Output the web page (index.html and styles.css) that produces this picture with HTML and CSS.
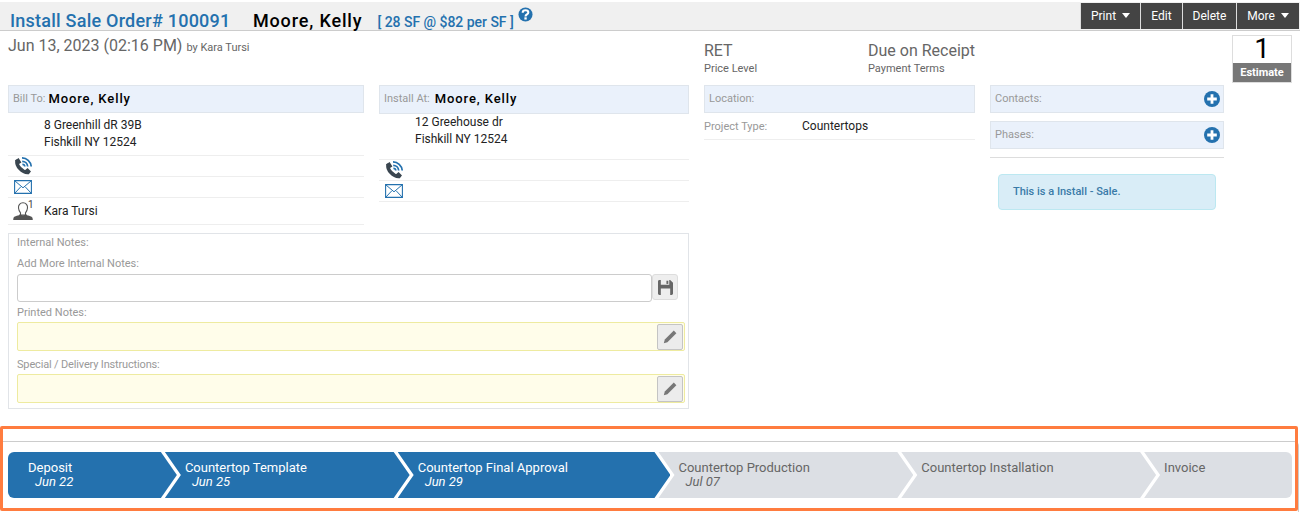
FILE: index.html
```html
<!DOCTYPE html>
<html lang="en">
<head>
<meta charset="utf-8">
<title>Install Sale Order</title>
<link rel="stylesheet" href="styles.css">
</head>
<body>
<svg class="defs" width="0" height="0" aria-hidden="true">
  <defs>
    <symbol id="phone" viewBox="0 0 18 18">
      <path fill="none" stroke="#3a4650" stroke-width="3.600" stroke-linecap="round" d="M3 4.200C2.200 8.600 8.200 15.600 13.800 15.400"/>
      <path fill="#3a4650" d="M1 3.400 4.600 1l2.800 4.400-3.200 2ZM10.600 13.400l3-2.400 3.400 3.400-2.600 3Z"/>
      <path fill="none" stroke="#2471ae" stroke-width="1.700" d="M8 .9c4.700 0 8.800 3.500 9.200 8.600M8.200 4.300c2.700 0 5.200 2 5.500 5.200M8.400 7.300c1.200 0 2.300.9 2.400 2.200"/>
    </symbol>
    <symbol id="mail" viewBox="0 0 18 14">
      <path fill="#fff" stroke="#2471ae" stroke-width="1.100" d="M.6.6h16.800v12.800H.6z"/>
      <path fill="none" stroke="#2471ae" d="m.8.8 8.200 7 8.200-7M.8 13.200l6-6.400M17.200 13.200l-6-6.400"/>
    </symbol>
    <symbol id="user" viewBox="0 0 20 18">
      <path fill="#fff" stroke="#555" stroke-width="1.100" d="M10 .8c-3 0-4.800 2.200-4.500 5.200.2 2 1 3.700 2 4.800v1.500l-.5.700h6l-.5-.7v-1.500c1-1.100 1.800-2.800 2-4.800.3-3-1.500-5.200-4.500-5.200Z"/>
      <path fill="#555" d="M7.200 12.400c-.8 1-5.900 1.400-6.700 3.300L.2 18h19.600l-.3-2.300c-.8-1.900-5.900-2.300-6.700-3.300-1.500 1-4.100 1-5.600 0Z"/>
    </symbol>
    <symbol id="plus" viewBox="0 0 16 16">
      <circle cx="8" cy="8" r="8" fill="#2471ae"/>
      <path fill="#fff" d="M6.600 3.200h2.800v3.400h3.400v2.800H9.400v3.400H6.600V9.400H3.200V6.600h3.400z"/>
    </symbol>
    <symbol id="pencil" viewBox="0 0 14 14">
      <path fill="#777" d="M10.800.6 13.400 3.200 4.400 12.200.8 13.200l1-3.600z"/>
    </symbol>
  </defs>
</svg>

<header class="topbar">
  <h1 class="title"><span class="title-blue">Install Sale Order# 100091</span> <span class="title-name">Moore, Kelly</span></h1>
  <span class="sf">[ 28 SF @ $82 per SF ]</span>
  <svg class="help" viewBox="0 0 16 16" aria-hidden="true"><circle cx="8" cy="8" r="7.500" fill="#2471ae"/><path fill="none" stroke="#fff" stroke-width="2.200" d="M5 6c0-1.700 1.300-2.600 3-2.600s3 .9 3 2.400c0 2.100-3 2-3 4.200"/><rect x="6.800" y="11" width="2.500" height="2.400" fill="#fff"/></svg>
  <nav class="actions">
    <button class="act">Print <i class="caret"></i></button>
    <button class="act">Edit</button>
    <button class="act">Delete</button>
    <button class="act">More <i class="caret"></i></button>
  </nav>
</header>

<main class="main">
  <section class="left">
    <p class="created"><span class="created-date">Jun 13, 2023 (02:16 PM)</span> <span class="created-by">by Kara Tursi</span></p>
    <div class="addresses">
      <div class="addr-col bill">
        <div class="bar"><span class="bar-label">Bill To:</span><strong class="bar-name">Moore, Kelly</strong></div>
        <div class="addr-text">8 Greenhill dR 39B<br>Fishkill NY 12524</div>
        <div class="addr-row"><svg class="ico-phone"><use href="#phone"/></svg></div>
        <div class="addr-row"><svg class="ico-mail"><use href="#mail"/></svg></div>
        <div class="addr-row rep"><span class="rep-icon"><svg class="ico-user"><use href="#user"/></svg><sup class="rep-num">1</sup></span><span>Kara Tursi</span></div>
      </div>
      <div class="addr-col install">
        <div class="bar"><span class="bar-label">Install At:</span><strong class="bar-name">Moore, Kelly</strong></div>
        <div class="addr-text">12 Greehouse dr<br>Fishkill NY 12524</div>
        <div class="addr-row"><svg class="ico-phone"><use href="#phone"/></svg></div>
        <div class="addr-row"><svg class="ico-mail"><use href="#mail"/></svg></div>
      </div>
    </div>
    <div class="notes">
      <div class="note-label first">Internal Notes:</div>
      <div class="note-label add">Add More Internal Notes:</div>
      <div class="add-row">
        <div class="input"></div>
        <button class="save" aria-label="Save"><svg class="ico-save" viewBox="0 0 16 16"><path fill="#666" d="M0 1.500C0 .7.700 0 1.500 0H3v5h9V0h1l3 3v11.500c0 .8-.7 1.500-1.500 1.500h-13C.7 16 0 15.300 0 14.500ZM3 9v7h10V9Z"/><rect x="9" y="0.800" width="2" height="3.400" fill="#666"/></svg></button>
      </div>
      <div class="note-label printed">Printed Notes:</div>
      <div class="yellow"><button class="edit" aria-label="Edit"><svg class="ico-pencil"><use href="#pencil"/></svg></button></div>
      <div class="note-label special">Special / Delivery Instructions:</div>
      <div class="yellow"><button class="edit" aria-label="Edit"><svg class="ico-pencil"><use href="#pencil"/></svg></button></div>
    </div>
  </section>

  <section class="col3">
    <div class="terms">
      <div class="term term-a"><div class="term-value">RET</div><div class="term-label">Price Level</div></div>
      <div class="term"><div class="term-value">Due on Receipt</div><div class="term-label">Payment Terms</div></div>
    </div>
    <div class="bar"><span class="bar-label">Location:</span></div>
    <div class="ptype"><span class="ptype-label">Project Type:</span><span>Countertops</span></div>
  </section>

  <section class="col4">
    <div class="bar bar-plus"><span class="bar-label">Contacts:</span><svg class="ico-plus"><use href="#plus"/></svg></div>
    <div class="bar bar-plus"><span class="bar-label">Phases:</span><svg class="ico-plus"><use href="#plus"/></svg></div>
    <div class="rule"></div>
    <div class="alert">This is a Install - Sale.</div>
  </section>

  <aside class="col5">
    <div class="status">
      <div class="status-num">1</div>
      <div class="status-label">Estimate</div>
    </div>
  </aside>
</main>

<section class="flow">
  <div class="steps">
    <div class="step done s1"><div class="step-name">Deposit</div><div class="step-date">Jun 22</div></div>
    <div class="step done s2"><div class="step-name">Countertop Template</div><div class="step-date">Jun 25</div></div>
    <div class="step done s3"><div class="step-name">Countertop Final Approval</div><div class="step-date">Jun 29</div></div>
    <div class="step s4"><div class="step-name">Countertop Production</div><div class="step-date">Jul 07</div></div>
    <div class="step s5"><div class="step-name">Countertop Installation</div></div>
    <div class="step s6"><div class="step-name">Invoice</div></div>
  </div>
</section>
<div class="highlight"></div>
</body>
</html>
```

FILE: styles.css
```css
* { box-sizing: border-box; }
html, body { margin: 0; padding: 0; }
body {
  position: relative;
  width: 1300px;
  height: 512px;
  overflow: hidden;
  background: #fff;
  font-family: Roboto, "Liberation Sans", sans-serif;
  font-size: 12px;
  color: #333;
}
.defs { position: absolute; }
button { font-family: inherit; padding: 0; cursor: pointer; }

/* header */
.topbar {
  display: flex;
  align-items: flex-start;
  height: 29px;
  margin-top: 2px;
  padding-left: 10px;
  background: #f0f0f0;
  border-bottom: 1px solid #ccc;
}
.title {
  margin: 0;
  font-size: 18px;
  line-height: 20px;
  padding-top: 9px;
  font-weight: 400;
  white-space: nowrap;
}
.title-blue { color: #2471ae; font-weight: 500; letter-spacing: .23px; }
.title-name { color: #000; margin-left: 18px; font-weight: 500; letter-spacing: .85px; }
.sf { margin: 11px 0 0 15px; font-size: 14px; line-height: 18px; color: #2471ae; font-weight: 500; letter-spacing: -.03px; white-space: nowrap; }
.help { width: 15px; height: 15px; margin: 5px 0 0 4px; }
.actions { display: flex; margin-left: auto; margin-right: 1px; margin-top: 1px; }
.act {
  height: 26px;
  border: 0;
  border-left: 1px solid #ddd;
  background: #444;
  color: #fff;
  font-size: 12px;
  white-space: nowrap;
}
.act:nth-child(1) { width: 60px; }
.act:nth-child(2) { width: 42px; }
.act:nth-child(3) { width: 54px; }
.act:nth-child(4) { width: 63px; }
.caret {
  display: inline-block;
  margin-left: 3px;
  vertical-align: 2px;
  border-left: 4px solid transparent;
  border-right: 4px solid transparent;
  border-top: 5px solid #fff;
}

/* main columns */
.main { display: flex; align-items: flex-start; height: 395px; padding-left: 8px; }
.left { width: 681px; }
.col3 { width: 271px; margin-left: 15px; }
.col4 { width: 234px; margin-left: 15px; padding-top: 54px; }
.col5 { width: 60px; margin-left: 8px; padding-top: 4px; }

.created { margin: 0; height: 54px; padding-top: 5px; line-height: 20px; color: #666; }
.created-date { font-size: 16px; }
.created-by { font-size: 11px; margin-left: 1px; }

.addresses { display: flex; gap: 15px; height: 148px; }
.addr-col.bill { width: 356px; }
.addr-col.install { width: 310px; }

.bar {
  display: flex;
  align-items: center;
  height: 28px;
  padding: 0 0 2px 4px;
  background: #eaf1fb;
  border: 1px solid #dfe5ec;
  white-space: nowrap;
}
.bar-label { font-size: 11px; color: #999; }
.bar-name { margin-left: 3px; font-size: 13px; font-weight: 500; letter-spacing: .9px; color: #000; }
.install .bar { height: 29px; }
.install .bar-name { margin-left: 5px; }

.addr-text {
  font-size: 12px;
  line-height: 17px;
  color: #222;
  padding: 4px 0 0 36px;
  border-bottom: 1px solid #eee;
  height: 43px;
}
.install .addr-text { padding: 0 0 0 36px; height: 46px; line-height: 17px; }
.addr-row {
  display: flex;
  align-items: center;
  height: 21px;
  padding-left: 6px;
  border-bottom: 1px solid #eee;
  color: #222;
}
.ico-phone { width: 18px; height: 18px; }
.ico-mail { width: 18px; height: 14px; }
.rep { height: 27px; padding-left: 5px; }
.rep-icon { position: relative; display: flex; width: 31px; }
.ico-user { width: 20px; height: 18px; }
.rep-num { position: absolute; left: 15px; top: -2px; font-size: 10px; line-height: 10px; color: #444; }

.notes {
  height: 176px;
  padding: 0 3px 0 8px;
  border: 1px solid #e1e4e8;
}
.note-label { font-size: 11px; line-height: 13px; color: #999; }
.note-label.first { padding-top: 2px; height: 15px; }
.note-label.add { margin-top: 8px; height: 17px; }
.note-label.printed { margin-top: 3px; height: 17px; padding-top: 1px; }
.note-label.special { margin-top: 7px; height: 16px; letter-spacing: -.16px; }
.add-row { display: flex; align-items: flex-start; }
.input { width: 635px; height: 28px; background: #fff; border: 1px solid #ccc; border-radius: 3px; }
.save {
  display: flex;
  align-items: center;
  justify-content: center;
  width: 26px;
  height: 26px;
  background: #eee;
  border: 1px solid #ddd;
  border-radius: 3px;
}
.ico-save { width: 15px; height: 15px; }
.yellow {
  display: flex;
  justify-content: flex-end;
  height: 29px;
  padding: 1px 1px 0 0;
  background: #fffdea;
  border: 1px solid #eeeba0;
  border-radius: 2px;
}
.edit {
  display: flex;
  align-items: center;
  justify-content: center;
  width: 26px;
  height: 26px;
  background: #ececec;
  border: 1px solid #c4c4c4;
  border-radius: 2px;
}
.ico-pencil { width: 14px; height: 14px; }

/* column 3 */
.terms { display: flex; height: 54px; padding-top: 10px; }
.term-a { width: 164px; }
.term-value { font-size: 16px; line-height: 19px; color: #666; }
.term-label { font-size: 11px; line-height: 17px; color: #666; }
.ptype {
  display: flex;
  align-items: center;
  height: 27px;
  border-bottom: 1px solid #eee;
  color: #222;
}
.ptype-label { width: 98px; font-size: 11px; color: #999; }

/* column 4 */
.bar-plus { justify-content: space-between; padding-right: 3px; margin-bottom: 8px; }
.bar-plus .ico-plus { margin-top: 2px; }
.ico-plus { width: 16px; height: 16px; }
.rule { border-top: 1px solid #ddd; }
.alert {
  width: 218px;
  height: 36px;
  margin: 16px 0 0 8px;
  padding-left: 14px;
  line-height: 33px;
  font-size: 11px;
  font-weight: 500;
  color: #3a7ba8;
  background: #d9edf7;
  border: 1px solid #bce8f1;
  border-radius: 4px;
}

/* status */
.status { border: 1px solid #ddd; height: 48px; text-align: center; }
.status-num { height: 27px; font-size: 28px; line-height: 26px; color: #000; }
.status-label { height: 19px; background: #777; color: #fff; font-size: 11px; font-weight: 700; line-height: 19px; }

/* workflow */
.flow {
  height: 71px;
  margin: 15px 1px 0 0;
  padding: 10px 6px 0 8px;
  border-top: 1px solid #ccc;
  border-right: 1px solid #ccc;
  border-top-right-radius: 5px;
}
.steps { display: flex; }
.step {
  --tip: 16px;
  height: 46px;
  margin-left: -12px;
  padding: 8px 0 0 20px;
  background: #dcdfe4;
  color: #666;
  font-size: 13px;
  clip-path: polygon(0 0, calc(100% - var(--tip)) 0, 100% 50%, calc(100% - var(--tip)) 100%, 0 100%, var(--tip) 50%);
  white-space: nowrap;
}
.step.done { background: #2471ae; color: #fff; }
.step-name { line-height: 15px; }
.step-date { line-height: 14px; margin-left: 7px; font-style: italic; font-size: 13px; }
.s1 { width: 169px; margin-left: 0; border-radius: 6px 0 0 6px; clip-path: polygon(0 0, calc(100% - 16px) 0, 100% 50%, calc(100% - 16px) 100%, 0 100%); }
.s2 { width: 245px; }
.s3 { width: 273px; }
.s4 { width: 255px; }
.s5 { width: 255px; }
.s6 { width: 148px; border-radius: 0 6px 6px 0; clip-path: polygon(0 0, 100% 0, 100% 100%, 0 100%, var(--tip) 50%); }

/* annotation frame drawn over the workflow */
.highlight {
  position: absolute;
  left: 0;
  top: 426px;
  width: 1298px;
  height: 85px;
  border: 3px solid #ff7c3f;
  border-radius: 2px;
  pointer-events: none;
}
```
